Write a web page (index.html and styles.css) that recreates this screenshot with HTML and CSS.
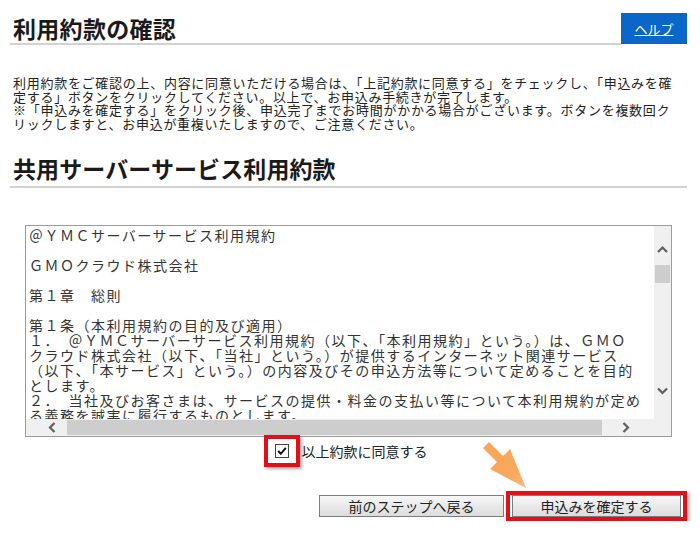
FILE: index.html
```html
<!DOCTYPE html>
<html lang="ja">
<head>
<meta charset="utf-8">
<title>利用約款の確認</title>
<link rel="stylesheet" href="styles.css">
</head>
<body>
<div class="page">
  <header class="title-bar">
    <h1 class="title">利用約款の確認</h1>
    <a class="help" href="#">ヘルプ</a>
  </header>
  <p class="intro">利用約款をご確認の上、内容に同意いただける場合は、「上記約款に同意する」をチェックし、「申込みを確<br>定する」ボタンをクリックしてください。以上で、お申込み手続きが完了します。<br>※「申込みを確定する」をクリック後、申込完了までお時間がかかる場合がございます。ボタンを複数回ク<br>リックしますと、お申込が重複いたしますので、ご注意ください。</p>
  <h2 class="section-title">共用サーバーサービス利用約款</h2>
  <div class="terms">
    <div class="terms-text">＠ＹＭＣサーバーサービス利用規約

ＧＭＯクラウド株式会社

第１章　総則

第１条（本利用規約の目的及び適用）
１．　＠ＹＭＣサーバーサービス利用規約（以下、「本利用規約」という。）は、ＧＭＯ
クラウド株式会社（以下、「当社」という。）が提供するインターネット関連サービス
（以下、「本サービス」という。）の内容及びその申込方法等について定めることを目的
とします。
２．　当社及びお客さまは、サービスの提供・料金の支払い等について本利用規約が定め
る義務を誠実に履行するものとします。</div>
    <div class="vbar">
      <span class="sb-btn"><svg width="17" height="17" viewBox="0 0 17 17"><polyline points="4,11 8.5,6.5 13,11" fill="none" stroke="#5f5f5f" stroke-width="2.2"/></svg></span>
      <span class="vthumb"></span>
      <span class="sb-btn sb-down"><svg width="17" height="17" viewBox="0 0 17 17"><polyline points="4,6.5 8.5,11 13,6.5" fill="none" stroke="#5f5f5f" stroke-width="2.2"/></svg></span>
    </div>
    <div class="hbar">
      <span class="sb-btn"><svg width="17" height="17" viewBox="0 0 17 17"><polyline points="10.5,4 6,8.5 10.5,13" fill="none" stroke="#5f5f5f" stroke-width="2.2"/></svg></span>
      <span class="hthumb"></span>
      <span class="sb-btn sb-right"><svg width="17" height="17" viewBox="0 0 17 17"><polyline points="6.5,4 11,8.5 6.5,13" fill="none" stroke="#5f5f5f" stroke-width="2.2"/></svg></span>
    </div>
  </div>
  <label class="agree">
    <span class="mark">
      <span class="check"><svg width="12" height="12" viewBox="0 0 12 12"><polyline points="2.2,6 4.8,8.8 9.8,2.8" fill="none" stroke="#111" stroke-width="2"/></svg></span>
    </span>
    <span class="agree-label">以上約款に同意する</span>
  </label>
  <div class="actions">
    <button class="btn btn-back" type="button">前のステップへ戻る</button>
    <span class="mark-btn"><button class="btn btn-submit" type="button">申込みを確定する</button></span>
  </div>
</div>
<svg class="pointer" width="50" height="52" viewBox="0 0 50 52">
  <defs>
    <linearGradient id="pg" x1="0" y1="0" x2="1" y2="1">
      <stop offset="0" stop-color="#f9a557"/>
      <stop offset="0.7" stop-color="#f9a85c"/>
      <stop offset="1" stop-color="#f7bb80"/>
    </linearGradient>
  </defs>
  <polygon points="5,10 11,4 25,18 32,11 48,50 12,31 19,24" fill="url(#pg)"/>
</svg>
</body>
</html>
```

FILE: styles.css
```css
html, body {
  margin: 0;
  padding: 0;
  background: #fff;
}

body {
  position: relative;
  font-family: "Noto Sans CJK JP", "Noto Sans", sans-serif;
  color: #222;
}

.page {
  padding: 13px 13px 0 10px;
}

.title-bar {
  display: flex;
}

.title {
  flex: 1;
  margin: 0;
  padding-left: 3px;
  font-size: 23px;
  font-weight: bold;
  letter-spacing: 0.3px;
  line-height: 30px;
  color: #1a1a1a;
  border-bottom: 2px solid #d2d2d2;
}

.help {
  width: 66px;
  height: 31px;
  background: #0a66c8;
  color: #fff;
  font-size: 13px;
  display: flex;
  align-items: center;
  justify-content: center;
  text-decoration: underline;
}

.intro {
  margin: 31px 0 0 3px;
  font-size: 13px;
  letter-spacing: 0.72px;
  line-height: 13.6px;
  white-space: nowrap;
  color: #222;
}

.section-title {
  margin: 23px 0 0;
  padding: 0 0 3px 3px;
  font-size: 23px;
  font-weight: bold;
  letter-spacing: 0.1px;
  line-height: 30px;
  color: #1a1a1a;
  border-bottom: 2px solid #d2d2d2;
}

.terms {
  margin: 37px 0 0 15px;
  width: 647px;
  height: 212px;
  box-sizing: border-box;
  border: 1px solid #9c9c9c;
  display: grid;
  grid-template-columns: 1fr 17px;
  grid-template-rows: 193px 17px;
}

.terms-text {
  overflow: hidden;
  padding: 2px 0 0 3px;
  font-size: 14px;
  line-height: 15px;
  letter-spacing: 1.5px;
  white-space: pre;
  color: #333;
}

.vbar {
  background: #f0f0f0;
  display: flex;
  flex-direction: column;
  padding-top: 15px;
}

.sb-btn {
  width: 17px;
  height: 17px;
  flex: none;
  display: flex;
}

.vthumb {
  margin: 7px 1px 0;
  height: 18px;
  background: #cdcdcd;
  flex: none;
}

.sb-down {
  margin-top: 99px;
}

.hbar {
  grid-column: 1 / -1;
  background: #f0f0f0;
  display: flex;
  align-items: center;
  padding-left: 18px;
}

.hthumb {
  margin-left: 6px;
  width: 535px;
  height: 15px;
  background: #cdcdcd;
  flex: none;
}

.sb-right {
  margin-left: 15px;
}

.agree {
  display: flex;
  justify-content: center;
  align-items: center;
  margin: -2px 0 0 12px;
  width: 647px;
  font-size: 14px;
}

.mark {
  width: 36px;
  height: 32px;
  box-sizing: border-box;
  border: 4px solid #e0101a;
  box-shadow: 2px 2px 3px rgba(0, 0, 0, 0.35);
  display: flex;
  align-items: center;
  justify-content: center;
}

.check {
  width: 14px;
  height: 14px;
  box-sizing: border-box;
  border: 1px solid #444;
  background: #fff;
  display: flex;
  align-items: center;
  justify-content: center;
}

.agree-label {
  margin-left: 2px;
  color: #222;
}

.actions {
  display: flex;
  justify-content: flex-end;
  align-items: center;
  margin-top: 24px;
}

.btn {
  height: 22px;
  padding: 0;
  font-family: inherit;
  font-size: 14px;
  color: #222;
  border: 1px solid #7c7c7c;
  background: linear-gradient(#f7f7f7, #dcdcdc);
}

.btn-back {
  width: 185px;
  margin-right: 2px;
}

.mark-btn {
  display: flex;
  border: 4px solid #e0101a;
  padding: 0 2px;
  box-shadow: 2px 2px 4px rgba(0, 0, 0, 0.35);
}

.btn-submit {
  width: 169px;
}

.pointer {
  position: absolute;
  left: 478px;
  top: 438px;
}
```
